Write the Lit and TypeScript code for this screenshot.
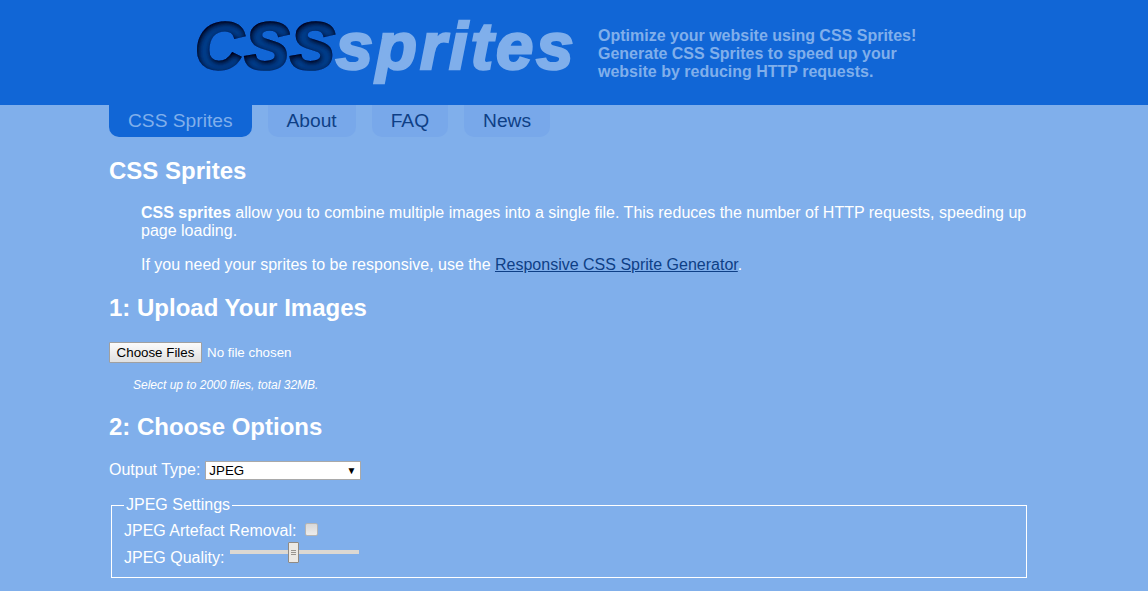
import { LitElement, html, css } from "lit";
import { customElement } from "lit/decorators.js";

@customElement("app-root")
export class AppRoot extends LitElement {
  static styles = css`
    :host { display: block; height: 591px; overflow: hidden; background: #80afeb; color: #fff; font-family: "Liberation Sans", Arial, sans-serif; font-size: 16px; }
    .defs { position: absolute; width: 0; height: 0; }
    header { height: 105px; background: #1166d6; display: flex; padding-left: 195px; box-sizing: border-box; }
    .logo { font-size: 67px; font-weight: bold; font-style: italic; line-height: 91px; height: 105px; width: 403px; white-space: nowrap; color: #80afeb; -webkit-text-stroke: 2.6px currentColor; }
    .css { color: #00408f; filter: url(#inner); letter-spacing: 1px; }
    .spr { letter-spacing: 3px; }
    .tag { font-size: 16px; font-weight: bold; line-height: 18px; color: #80afeb; padding-top: 27px; white-space: pre-line; }
    nav { display: flex; gap: 16px; margin-left: 109px; height: 32px; }
    nav a { display: block; padding: 0 19px; font-size: 19.2px; line-height: 32px; border-radius: 0 0 10px 10px; background: #78a8ea; color: #0e3f86; }
    nav a.on { background: #1166d6; color: #80afeb; }
    main { width: 918px; margin-left: 109px; }
    h1 { font-size: 24px; line-height: 28px; margin: 0; font-weight: bold; }
    .h0 { margin-top: 20px; }
    .p1 { margin: 19px 0 0 32px; line-height: 18px; }
    .p2 { margin: 16px 0 0 32px; line-height: 18px; }
    .p2 a { color: #0e3f86; text-decoration: underline; }
    .h1b { margin-top: 20px; }
    .file { display: flex; align-items: center; margin-top: 20px; height: 21px; font-size: 13.33px; }
    .btn { box-sizing: border-box; width: 93px; height: 21px; font: 13.33px "Liberation Sans", Arial, sans-serif; color: #000; background: linear-gradient(#fbfbfb, #e0e0e0); border: 1px solid #a0a0a0; border-radius: 1px; padding: 0; text-align: center; line-height: 19px; }
    .file span { margin-left: 5px; }
    .note { margin: 16px 0 0 24px; font-size: 12px; font-style: italic; line-height: 13px; }
    .h2b { margin-top: 21px; }
    .out { display: flex; align-items: center; margin-top: 19px; height: 20px; line-height: 18px; }
    .sel { box-sizing: border-box; width: 156px; height: 19px; margin-left: 5px; background: #fff; border: 1px solid #a9a9a9; color: #000; font-size: 13.33px; line-height: 17px; padding-left: 3px; display: flex; justify-content: space-between; }
    .sel i { font-style: normal; font-size: 10px; margin-right: 4px; }
    fieldset { margin: 16px 0 0 2px; width: 916px; box-sizing: border-box; height: 82px; border: 1px solid #fff; padding: 0 12px; }
    legend { padding: 0 2px; margin-left: 0; line-height: 18px; }
    .row { display: flex; align-items: flex-start; line-height: 18px; height: 27px; }
    .first { margin-top: 8px; }
    .chk { box-sizing: border-box; width: 13px; height: 13px; margin: 1px 0 0 8px; border: 1px solid #b5b5b5; border-radius: 2px; background: linear-gradient(#d8d8d8, #ececec); }
    .slider { position: relative; width: 129px; height: 4px; margin: 1px 0 0 6px; background: #dcd8d2; }
    .thumb { position: absolute; left: 58px; top: -8px; box-sizing: border-box; width: 11px; height: 21px; background: #ece9e4; border: 1px solid #8f8a84; border-radius: 1px; display: flex; flex-direction: column; justify-content: center; gap: 1px; padding: 0 2px; }
    .thumb b { display: block; height: 1px; background: #9a9690; }
  `;
  render() {
    return html`
      <svg class="defs" aria-hidden="true">
        <filter id="inner" x="-5%" y="-5%" width="110%" height="110%">
          <feGaussianBlur in="SourceAlpha" stdDeviation="3.2" result="b"/>
          <feOffset in="b" dy="2" dx="1" result="o"/>
          <feComposite in="SourceAlpha" in2="o" operator="out" result="edge"/>
          <feFlood flood-color="#000"/>
          <feComposite in2="edge" operator="in" result="shade"/>
          <feMerge><feMergeNode in="SourceGraphic"/><feMergeNode in="shade"/><feMergeNode in="shade"/></feMerge>
        </filter>
      </svg>
      <header>
        <div class="logo"><span class="css">CSS</span><span class="spr">sprites</span></div>
        <div class="tag">Optimize your website using CSS Sprites!
Generate CSS Sprites to speed up your
website by reducing HTTP requests.</div>
      </header>
      <nav>
        <a class="on">CSS Sprites</a><a>About</a><a>FAQ</a><a>News</a>
      </nav>
      <main>
        <h1 class="h0">CSS Sprites</h1>
        <p class="p1"><b>CSS sprites</b> allow you to combine multiple images into a single file. This reduces the number of HTTP requests, speeding up page loading.</p>
        <p class="p2">If you need your sprites to be responsive, use the <a>Responsive CSS Sprite Generator</a>.</p>
        <h1 class="h1b">1: Upload Your Images</h1>
        <div class="file"><button class="btn">Choose Files</button><span>No file chosen</span></div>
        <div class="note">Select up to 2000 files, total 32MB.</div>
        <h1 class="h2b">2: Choose Options</h1>
        <div class="out">Output Type: <div class="sel">JPEG<i>▼</i></div></div>
        <fieldset>
          <legend>JPEG Settings</legend>
          <div class="row first">JPEG Artefact Removal:<div class="chk"></div></div>
          <div class="row">JPEG Quality:<div class="slider"><div class="thumb"><b></b><b></b><b></b></div></div></div>
        </fieldset>
      </main>
    `;
  }
}
